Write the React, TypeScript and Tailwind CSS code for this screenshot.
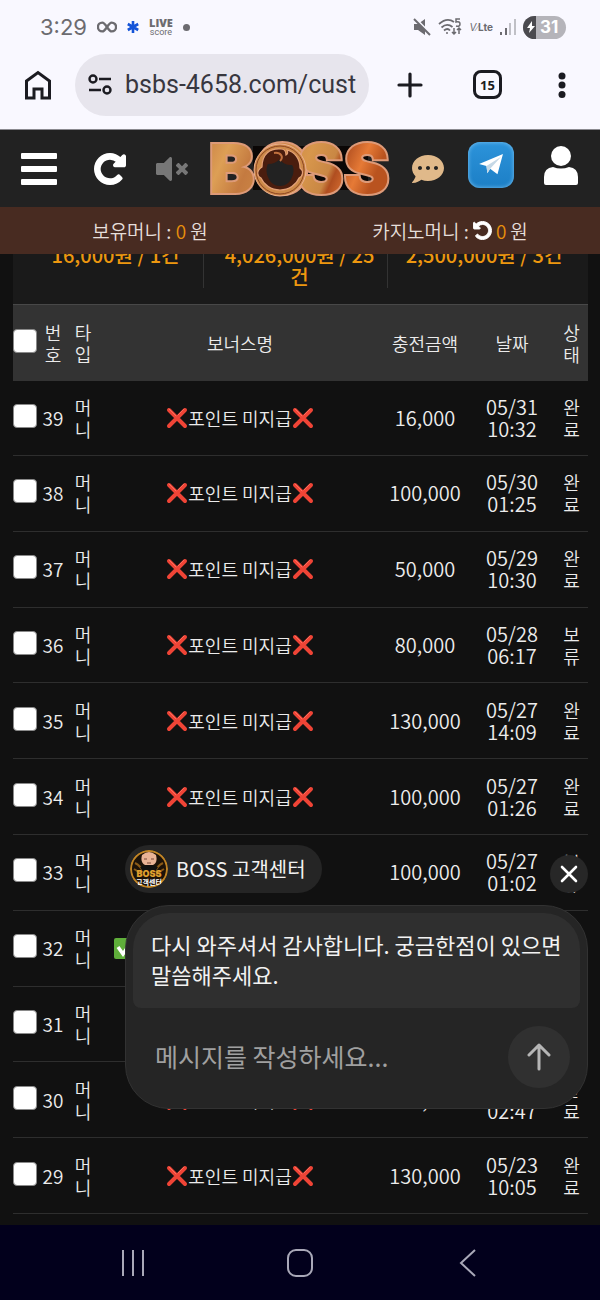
import { useState } from "react";
import { FaCommentDots, FaVolumeMute } from "react-icons/fa";

type BonusRow = {
  id: number;
  amount: string;
  date: string;
  time: string;
  status: "완료" | "보류";
  isBonus?: boolean;
};

const ROWS: BonusRow[] = [
  { id: 39, amount: "16,000", date: "05/31", time: "10:32", status: "완료" },
  { id: 38, amount: "100,000", date: "05/30", time: "01:25", status: "완료" },
  { id: 37, amount: "50,000", date: "05/29", time: "10:30", status: "완료" },
  { id: 36, amount: "80,000", date: "05/28", time: "06:17", status: "보류" },
  { id: 35, amount: "130,000", date: "05/27", time: "14:09", status: "완료" },
  { id: 34, amount: "100,000", date: "05/27", time: "01:26", status: "완료" },
  { id: 33, amount: "100,000", date: "05/27", time: "01:02", status: "보류" },
  { id: 32, amount: "", date: "", time: "", status: "완료", isBonus: true },
  { id: 31, amount: "", date: "", time: "", status: "완료" },
  { id: 30, amount: "100,000", date: "05/24", time: "02:47", status: "완료" },
  { id: 29, amount: "130,000", date: "05/23", time: "10:05", status: "완료" },
];

const SUMMARY = ["16,000원 / 1건", "4,026,000원 / 25건", "2,500,000원 / 3건"];

const CHECKBOX =
  "block size-6 appearance-none rounded-[4px] border border-[#8a8a8a] bg-white checked:bg-[#2f7cf6]";

function RotateIcon({ className }: { className: string }) {
  return (
    <svg
      className={className}
      viewBox="-40 88 1616 1616"
      fill="currentColor"
      stroke="currentColor"
      strokeWidth="80"
      aria-hidden="true"
    >
      <path d="M1536 256v448q0 26-19 45t-45 19h-448q-42 0-59-40-17-39 14-69l138-138q-148-137-349-137-104 0-198.500 40.500t-163.500 109.500-109.500 163.500-40.500 198.500 40.500 198.500 109.500 163.500 163.500 109.500 198.500 40.500q119 0 225-52t179-147q7-10 23-12 15 0 25 9l137 138q9 8 9.500 20.500t-7.500 22.500q-109 132-264 204.500t-327 72.500q-156 0-298-61t-245-164-164-245-61-298 61-298 164-245 245-164 298-61q147 0 284.500 55.500t244.500 156.500l130-129q29-31 70-14 39 17 39 59z" />
    </svg>
  );
}

function CrossMark() {
  return (
    <svg className="size-[22px] shrink-0" viewBox="0 0 22 22" aria-hidden="true">
      <path d="M3 3l16 16M19 3L3 19" stroke="#ef4436" strokeWidth="4" strokeLinecap="round" />
      <path d="M3 2l7 7M18 2l-6 6" stroke="#ff6d5d" strokeWidth="1" strokeLinecap="round" />
    </svg>
  );
}

function StatusBar() {
  return (
    <div className="flex h-[54px] items-center justify-between pr-[34px] pl-10 text-[#6c6b70]">
      <div className="flex items-center gap-[10px]">
        <span className="font-[Inter] text-[22px] leading-7">3:29</span>
        <svg className="h-3 w-5" viewBox="0 0 20 12" fill="none" stroke="currentColor" strokeWidth="2.400">
          <path d="M10 6C8 3 7 1.600 5.300 1.600a4.200 4.200 0 0 0 0 8.800C7 10.400 8 9 10 6s3-4.400 4.700-4.400a4.200 4.200 0 0 1 0 8.800C13 10.400 12 9 10 6z" />
        </svg>
        <svg className="size-3" viewBox="0 0 12 12" stroke="#1554d8" strokeWidth="2.600">
          <path d="M6 0v12M.8 3l10.400 6M11.200 3L.8 9" />
        </svg>
        <span className="flex flex-col items-center">
          <span className="font-['Open_Sans'] text-[11px] leading-[11px] font-extrabold">LIVE</span>
          <span className="font-[Roboto] text-[9px] leading-[9px]">score</span>
        </span>
        <span className="size-[7px] rounded-full bg-current" />
      </div>
      <div className="flex items-center gap-[7px]">
        <svg className="size-[18px]" viewBox="0 0 18 18" fill="currentColor">
          <path d="M1 6h4l7-5v16l-7-5H1z" />
          <path d="M2 0l16 16" stroke="#f9f8ff" strokeWidth="2" />
          <path d="M1 1l16 16" stroke="currentColor" strokeWidth="2" />
        </svg>
        <svg className="h-[18px] w-6" viewBox="0 0 24 18" fill="none" stroke="currentColor" strokeWidth="1.800">
          <path d="M1 6q8-7 15-2M3.500 9.500q5.500-5 11-.5M6 12.500q3.500-3 6 0" />
          <circle cx="9" cy="15" r="1" fill="currentColor" stroke="none" />
          <path d="M22 1h-4v3q4-1 4 2t-4 2" strokeWidth="1.500" />
          <path d="M16 10v6m-2-2l2 2 2-2M21 16v-6m-2 2l2-2 2 2" strokeWidth="1.500" />
        </svg>
        <span className="font-[Inter] text-[10px] leading-3">
          <i>V∕</i>
          <b>Lte</b>
        </span>
        <svg className="h-4 w-4" viewBox="0 0 16 16" fill="currentColor">
          <path d="M0 13h2v3H0zM5 9h2v7H5z" />
          <path d="M9 4h2v12H9zM14 0h2v16h-2z" opacity=".4" />
        </svg>
        <span className="flex h-[23px] w-[43px] items-center overflow-hidden rounded-full bg-[#b5b4ba] font-[Inter] text-[17px] leading-6 font-bold text-white">
          <span className="flex h-full w-[13px] items-center justify-end bg-[#4b4a4f]">
            <svg className="h-3 w-2.5" viewBox="0 0 10 12" fill="white">
              <path d="M6 0L1 7h3l-1 5 6-7H6z" />
            </svg>
          </span>
          <span className="pl-1">31</span>
        </span>
      </div>
    </div>
  );
}

function BrowserBar() {
  return (
    <div className="flex h-[76px] items-start border-b border-[#8b8a90] pr-[34px] pl-6 text-[#1b1b21]">
      <button type="button" aria-label="Home" className="mt-4">
        <svg className="h-[30px] w-7" viewBox="0 0 28 30" fill="none" stroke="currentColor" strokeWidth="3">
          <path d="M2.500 11L14 2.500 25.500 11v17H18v-9h-8v9H2.500z" />
        </svg>
      </button>
      <div className="ml-[23px] flex h-[62px] min-w-0 flex-1 items-center rounded-full bg-[#e7e5ed] pr-2 pl-3">
        <svg className="h-6 w-[26px] shrink-0" viewBox="0 0 26 24" fill="none" stroke="currentColor" strokeWidth="2.400">
          <circle cx="6" cy="6" r="3.500" />
          <circle cx="20" cy="17" r="3.500" />
          <path d="M12 6h12M2 17h12" />
        </svg>
        <input
          aria-label="Address"
          className="ml-3 w-full min-w-0 bg-transparent font-[Roboto] text-[25px] text-[#38373f] outline-none"
          defaultValue="bsbs-4658.com/cust"
        />
      </div>
      <button type="button" aria-label="New tab" className="mt-[18px] ml-7">
        <svg className="size-[26px]" viewBox="0 0 26 26" stroke="currentColor" strokeWidth="3.200" strokeLinecap="round">
          <path d="M13 2v22M2 13h22" />
        </svg>
      </button>
      <button
        type="button"
        aria-label="Tabs"
        className="mt-4 ml-[50px] size-[29px] rounded-lg border-3 border-current font-['Open_Sans'] text-[13px] leading-5 font-bold"
      >
        15
      </button>
      <button type="button" aria-label="Menu" className="mt-[18px] ml-[56px]">
        <svg className="h-[26px] w-2" viewBox="0 0 8 26" fill="currentColor">
          <circle cx="4" cy="4" r="3.500" />
          <circle cx="4" cy="13" r="3.500" />
          <circle cx="4" cy="22.500" r="3.500" />
        </svg>
      </button>
    </div>
  );
}

function BossLogo() {
  return (
    <svg className="h-[58px] w-[184px] overflow-visible" viewBox="0 0 184 58" role="img" aria-label="BOSS">
      <defs>
        <linearGradient id="copper" x1="0" y1="0" x2="1" y2="0.200">
          <stop offset="0" stopColor="#c98045" />
          <stop offset="0.150" stopColor="#dd9f55" />
          <stop offset="0.300" stopColor="#c47a40" />
          <stop offset="0.600" stopColor="#d8974c" />
          <stop offset="0.740" stopColor="#c98744" />
          <stop offset="0.780" stopColor="#b04e20" />
          <stop offset="0.900" stopColor="#e67a36" />
          <stop offset="1" stopColor="#b9531f" />
        </linearGradient>
      </defs>
      <path d="M45 6h115v44H45z" fill="#0b0706" />
      <text
        x="1 48 90 136"
        y="53"
        className="font-[Inter] text-[68px] font-black [paint-order:stroke]"
        fill="url(#copper)"
        stroke="#dd9a78"
        strokeWidth="4"
      >
        BOSS
      </text>
      <circle cx="72" cy="30" r="26" fill="#cd8a48" stroke="#ecb092" />
      <circle cx="72" cy="30" r="24" fill="none" stroke="#8c4423" />
      <path
        d="M54 27C54 14 62 8 73 9c3 0 5 2 5 6 2-1 2-3 1-5 8 2 13 9 13 18 4 3 3 8-1 10-3 7-10 12-19 12s-16-5-19-12c-4-2-5-7 1-11z"
        fill="#4a1d0e"
        stroke="#e3a077"
        strokeWidth="1.200"
      />
      <path d="M60 24c5 0 9-2 12-5 2 4 6 6 12 6 2 2 2 8 0 12-2 6-7 9-12 9s-10-3-12-9c-2-4-2-10 0-13z" fill="#222" />
      <path d="M66 13c7-1 10 4 6 8" fill="none" stroke="#c0713f" strokeWidth="2" />
    </svg>
  );
}

function SiteHeader() {
  return (
    <header className="relative z-10 text-white">
      <div className="flex h-[77px] items-center bg-[#222] px-[21px]">
        <button type="button" aria-label="메뉴" className="flex w-9 flex-col gap-[7px]">
          <span className="h-[6px] rounded-[1px] bg-white" />
          <span className="h-[6px] rounded-[1px] bg-white" />
          <span className="h-[6px] rounded-[1px] bg-white" />
        </button>
        <button type="button" aria-label="새로고침" className="ml-[37px]">
          <RotateIcon className="size-8" />
        </button>
        <button type="button" aria-label="음소거" className="ml-[30px] text-[#777]">
          <FaVolumeMute className="size-8" />
        </button>
        <a href="#home" className="ml-5">
          <BossLogo />
        </a>
        <button type="button" aria-label="채팅" className="ml-5 text-[#e0b98a]">
          <FaCommentDots className="size-8" />
        </button>
        <a
          href="#telegram"
          aria-label="텔레그램"
          className="mb-2 ml-6 flex size-[46px] items-center justify-center rounded-xl bg-linear-to-b from-[#2c93da] to-[#1c7fc6] inset-shadow-[0_0_4px_#7cc4f2]"
        >
          <svg className="h-[22px] w-[25px]" viewBox="0 0 27 24">
            <path d="M0 11L26 0 20 22 12 16l-3 5-1-8z" fill="#fff" />
            <path d="M8 13L24 3 12 16l-3 5z" fill="#c5d8e6" />
          </svg>
        </a>
        <button type="button" aria-label="내 정보" className="mb-2 ml-auto">
          <svg className="h-10 w-9" viewBox="0 0 36 40" fill="currentColor">
            <circle cx="18" cy="11" r="10" />
            <path d="M1 38V32q0-9 9-10 8 3 16 0 9 1 9 10v6q0 2-2 2H3q-2 0-2-2z" />
          </svg>
        </button>
      </div>
      <div className="grid h-[47px] grid-cols-2 items-center bg-[#482b21] text-center text-[19px] leading-[22px] font-[350] text-[#e6dfdb]">
        <p>
          보유머니 : <span className="text-[#e8900c]">0</span> 원
        </p>
        <p className="flex items-center justify-center gap-1">
          카지노머니 :
          <RotateIcon className="size-[19px] -scale-x-100 text-white" />
          <span className="text-[#e8900c]">0</span> 원
        </p>
      </div>
    </header>
  );
}

function BonusTable() {
  const [selected, setSelected] = useState<number[]>([]);

  const toggle = (id: number) => {
    setSelected((prev) => (prev.includes(id) ? prev.filter((item) => item !== id) : [...prev, id]));
  };

  return (
    <table className="h-[910px] w-full table-fixed text-center text-[18px] leading-[22px] font-[350] text-[#ececec]">
      <colgroup>
        <col className="w-[26px]" />
        <col className="w-[28px]" />
        <col className="w-[32px]" />
        <col />
        <col className="w-[88px]" />
        <col className="w-[86px]" />
        <col className="w-[33px]" />
      </colgroup>
      <thead>
        <tr className="h-[76px] border-t border-[#484848] bg-[#333]">
          <th className="pb-1">
            <input
              type="checkbox"
              aria-label="전체 선택"
              className={CHECKBOX}
              checked={selected.length === ROWS.length}
              onChange={(e) => setSelected(e.target.checked ? ROWS.map((row) => row.id) : [])}
            />
          </th>
          <th className="px-1 font-[350]">번호</th>
          <th className="px-1 font-[350]">타입</th>
          <th className="font-[350]">보너스명</th>
          <th className="font-[350]">충전금액</th>
          <th className="font-[350]">날짜</th>
          <th className="px-1 font-[350]">상태</th>
        </tr>
      </thead>
      <tbody>
        {ROWS.map((row) => (
          <tr key={row.id} className="border-b border-[#2e2e2e]">
            <td className="pb-1">
              <input
                type="checkbox"
                aria-label={`${row.id}번 선택`}
                className={CHECKBOX}
                checked={selected.includes(row.id)}
                onChange={() => toggle(row.id)}
              />
            </td>
            <td className="text-[19px]">{row.id}</td>
            <td className="px-1">머니</td>
            <td className="px-[15px]">
              {row.isBonus ? (
                <svg className="size-[21px]" viewBox="0 0 21 21" aria-hidden="true">
                  <rect width="21" height="21" rx="2" fill="#5fae3a" />
                  <path d="M4 9l5 7L18 3" fill="none" stroke="#fff" strokeWidth="3.500" />
                </svg>
              ) : (
                <span className="flex items-center justify-center">
                  <CrossMark />
                  포인트 미지급
                  <CrossMark />
                </span>
              )}
            </td>
            <td className="text-[20px]">{row.amount}</td>
            <td className="text-[20px]">
              {row.date}
              <br />
              {row.time}
            </td>
            <td className="px-1">{row.status}</td>
          </tr>
        ))}
      </tbody>
    </table>
  );
}

function Avatar() {
  return (
    <svg className="size-[38px] shrink-0 rounded-full" viewBox="0 0 38 38" aria-hidden="true">
      <circle cx="19" cy="19" r="18" fill="#1c1208" stroke="#c08425" strokeWidth="2" />
      <path d="M5 13q6 3 8 9M33 13q-6 3-8 9M4 19l8 5M34 19l-8 5" stroke="#8a5a18" strokeWidth="2" fill="none" />
      <path d="M12 5q7-6 14 0 2 8-3 10h-8q-5-3-3-10z" fill="#e9b396" />
      <path d="M14 9h3M21 9h3M17 13h4" stroke="#7a4a38" />
      <path d="M10 17q9-4 18 0l-3 5H13z" fill="#101010" />
      <text x="19" y="27" textAnchor="middle" className="font-[Inter] text-[9px] font-black" fill="#e0a02e">
        BOSS
      </text>
      <text x="19" y="35" textAnchor="middle" className="text-[7px] font-bold" fill="#fff">
        고객센터
      </text>
    </svg>
  );
}

function ChatWidget() {
  const [message, setMessage] = useState("");

  return (
    <div className="absolute right-3 bottom-[116px] left-[125px] z-20 text-[#f2f2f2]">
      <div className="flex items-end justify-between">
        <div className="flex h-12 items-center gap-2 rounded-full bg-[#252525] pr-4 pl-[5px] text-[20px]">
          <Avatar />
          BOSS 고객센터
        </div>
        <button
          type="button"
          aria-label="닫기"
          className="flex size-[38px] items-center justify-center rounded-full bg-[#272727]"
        >
          <svg className="size-[18px]" viewBox="0 0 18 18" stroke="#fff" strokeWidth="2.600" strokeLinecap="round">
            <path d="M2 2l14 14M16 2L2 16" />
          </svg>
        </button>
      </div>
      <div className="mt-3 rounded-[44px] border border-[#323232] bg-[#252525] p-[7px]">
        <p className="h-[95px] rounded-t-[36px] rounded-b-lg bg-[#2f2f2f] pt-4 pr-3 pl-[18px] text-[22px] leading-[30px]">
          다시 와주셔서 감사합니다. 궁금한점이 있으면 말씀해주세요.
        </p>
        <form
          className="flex h-[93px] items-center pt-1 pr-[10px] pl-[22px]"
          onSubmit={(e) => e.preventDefault()}
        >
          <input
            aria-label="메시지"
            className="min-w-0 flex-1 bg-transparent text-[25px] outline-none placeholder:text-[#a0a0a0]"
            placeholder="메시지를 작성하세요..."
            value={message}
            onChange={(e) => setMessage(e.target.value)}
          />
          <button
            type="submit"
            aria-label="보내기"
            className="flex size-[62px] items-center justify-center rounded-full bg-[#303030]"
          >
            <svg
              className="h-7 w-6"
              viewBox="0 0 24 28"
              fill="none"
              stroke="#b5b5b5"
              strokeWidth="3"
              strokeLinecap="round"
              strokeLinejoin="round"
            >
              <path d="M12 26V2M2 12L12 2l10 10" />
            </svg>
          </button>
        </form>
      </div>
    </div>
  );
}

function SystemNav() {
  return (
    <nav className="grid h-[75px] grid-cols-[1fr_70px_1fr] items-center bg-[#02001c] text-[#a9a8b8]">
      <button type="button" aria-label="Recents" className="flex justify-center">
        <svg className="h-7 w-6" viewBox="0 0 24 28" stroke="currentColor" strokeWidth="2">
          <path d="M2 1v26M12 1v26M22 1v26" />
        </svg>
      </button>
      <button type="button" aria-label="Home screen" className="flex justify-center">
        <svg className="size-7" viewBox="0 0 28 28" fill="none" stroke="currentColor" strokeWidth="2">
          <rect x="2" y="1" width="24" height="26" rx="8" />
        </svg>
      </button>
      <button type="button" aria-label="Back" className="flex justify-center">
        <svg className="h-7 w-5" viewBox="0 0 20 28" fill="none" stroke="currentColor" strokeWidth="2">
          <path d="M17 1L3 14l14 13" />
        </svg>
      </button>
    </nav>
  );
}

export default function App() {
  return (
    <div className="flex h-screen flex-col bg-[#111] font-['Noto_Sans_CJK_KR',sans-serif]">
      <div className="bg-[#f9f8ff]">
        <StatusBar />
        <BrowserBar />
      </div>
      <SiteHeader />
      <main className="relative min-h-0 flex-1">
        <div className="h-full overflow-hidden pr-3 pl-[13px]">
          <section className="-mt-[10px] grid grid-cols-3 bg-[#1a1a1a] pr-4 pb-4 pl-[7px] text-center text-[20px] leading-[22px] font-medium text-[#ed970f]">
            {SUMMARY.map((text) => (
              <p key={text} className="border-[#333] pr-2 pl-4 not-last:border-r">
                {text}
              </p>
            ))}
          </section>
          <BonusTable />
        </div>
        <ChatWidget />
      </main>
      <SystemNav />
    </div>
  );
}
